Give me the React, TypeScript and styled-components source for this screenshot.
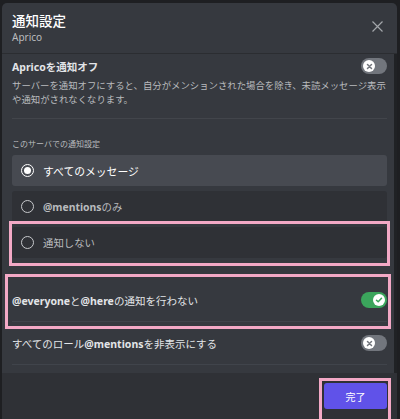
import styled, { createGlobalStyle } from 'styled-components';

const GlobalStyle = createGlobalStyle`
  html, body {
    margin: 0;
    background: #1e1f22;
  }
  body {
    font-family: 'Noto Sans', 'Noto Sans CJK JP', sans-serif;
    -webkit-font-smoothing: antialiased;
  }
`;

const Modal = styled.div`
  display: flex;
  flex-direction: column;
  height: 416px;
  margin: 3px 3px 0 2px;
  background: #36393f;
  border-radius: 5px 5px 0 0;
  overflow: hidden;
`;

const Header = styled.header`
  display: flex;
  align-items: flex-start;
  justify-content: space-between;
  padding: 10px 10px 9px 10px;
  border-bottom: 1px solid #2b2d31;
`;

const Title = styled.h1`
  margin: 0;
  font-size: 13.5px;
  line-height: 16px;
  font-weight: 500;
  color: #ffffff;
`;

const Subtitle = styled.div`
  margin-top: 1px;
  font-size: 10px;
  line-height: 14px;
  color: #b9bbbe;
`;

const CloseButton = styled.button`
  display: flex;
  margin: 8px 4px 0 0;
  padding: 0;
  border: none;
  background: none;
  color: #a3a6aa;
`;

const Body = styled.div`
  flex: 1;
  display: flex;
  min-height: 0;
`;

const Content = styled.div`
  flex: 1;
  padding: 4px 7px 0 10px;
`;

const ScrollTrack = styled.div`
  width: 3px;
  background: #202225;
`;

const SettingRow = styled.div<{ $tall?: boolean }>`
  display: flex;
  align-items: center;
  justify-content: space-between;
  height: ${({ $tall }) => ($tall ? '42px' : '16px')};
  border-bottom: ${({ $tall }) => ($tall ? '1px solid #40444b' : 'none')};
`;

const SettingLabel = styled.span<{ $bold?: boolean }>`
  font-size: 10.5px;
  font-weight: ${({ $bold }) => ($bold ? 700 : 400)};
  color: #e3e5e8;

  strong {
    font-weight: 700;
  }
`;

const Description = styled.p`
  margin: 5px 0 0;
  font-size: 9.4px;
  line-height: 13.5px;
  color: #b9bbbe;
`;

const Divider = styled.hr`
  margin: 12px 0 0;
  border: none;
  border-top: 1px solid #42454b;
`;

const SectionLabel = styled.div`
  margin: 19px 0 5px;
  font-size: 8px;
  line-height: 12px;
  color: #b9bbbe;
`;

const RadioList = styled.div`
  display: flex;
  flex-direction: column;
  gap: 5px;
  margin-bottom: 21px;
`;

const RadioItem = styled.div<{ $selected?: boolean }>`
  display: flex;
  align-items: center;
  gap: 9px;
  height: 31px;
  padding-left: 9px;
  border-radius: 3px;
  background: ${({ $selected }) => ($selected ? '#474a51' : '#2f3136')};
  color: ${({ $selected }) => ($selected ? '#ffffff' : '#b9bbbe')};
  font-size: ${({ $selected }) => ($selected ? '10.8px' : '10.4px')};

  strong {
    font-weight: 700;
  }
`;

const RadioDot = styled.span<{ $checked?: boolean }>`
  position: relative;
  box-sizing: border-box;
  width: 13px;
  height: 13px;
  border-radius: 50%;
  border: 1.6px solid ${({ $checked }) => ($checked ? '#ffffff' : '#c7c9cc')};

  &::after {
    content: '';
    display: ${({ $checked }) => ($checked ? 'block' : 'none')};
    position: absolute;
    inset: 2px;
    border-radius: 50%;
    background: #ffffff;
  }
`;

// pink annotation frame drawn over a row
const Marked = styled.div<{ $inset: string }>`
  position: relative;

  &::after {
    content: '';
    position: absolute;
    inset: ${({ $inset }) => $inset};
    border: 3px solid #f3a9c6;
    pointer-events: none;
  }
`;

const Toggle = styled.span<{ $on?: boolean }>`
  display: flex;
  align-items: center;
  justify-content: ${({ $on }) => ($on ? 'flex-end' : 'flex-start')};
  box-sizing: border-box;
  width: 26px;
  height: 16px;
  padding: 0 2px;
  border-radius: 8px;
  background: ${({ $on }) => ($on ? '#3ba55c' : '#72767d')};
`;

const Knob = styled.span<{ $on?: boolean }>`
  display: flex;
  align-items: center;
  justify-content: center;
  width: 12px;
  height: 12px;
  border-radius: 50%;
  background: #ffffff;
  color: ${({ $on }) => ($on ? '#3ba55c' : '#72767d')};
`;

const Footer = styled.footer`
  display: flex;
  justify-content: flex-end;
  height: 46px;
  padding: 10px 10px 0;
  box-sizing: border-box;
  background: #2f3136;
`;

const DoneButton = styled.button`
  width: 63px;
  height: 26px;
  border: none;
  border-radius: 3px;
  background: #6052e9;
  color: #ffffff;
  font-family: inherit;
  font-size: 10px;
`;

function Switch({ on }: { on?: boolean }) {
  return (
    <Toggle $on={on}>
      <Knob $on={on}>
        {on ? (
          <svg width="8" height="8" viewBox="0 0 8 8">
            <path d="M1.5 4.2 3.2 5.8 6.5 2.2" fill="none" stroke="currentColor" strokeWidth="1.5" strokeLinecap="round" strokeLinejoin="round" />
          </svg>
        ) : (
          <svg width="7" height="7" viewBox="0 0 7 7">
            <path d="M1.5 1.5 5.5 5.5M5.5 1.5 1.5 5.5" stroke="currentColor" strokeWidth="1.5" strokeLinecap="round" />
          </svg>
        )}
      </Knob>
    </Toggle>
  );
}

export default function App() {
  const levels = [
    { id: 'all', label: <>すべてのメッセージ</>, checked: true },
    { id: 'mentions', label: <><strong>@mentions</strong>のみ</> },
    { id: 'nothing', label: <>通知しない</>, marked: true },
  ];

  return (
    <>
      <GlobalStyle />
      <Modal>
        <Header>
          <div>
            <Title>通知設定</Title>
            <Subtitle>Aprico</Subtitle>
          </div>
          <CloseButton aria-label="閉じる">
            <svg width="11" height="11" viewBox="0 0 11 11">
              <path d="M0.5 0.5 10.5 10.5M10.5 0.5 0.5 10.5" stroke="currentColor" strokeWidth="1.2" />
            </svg>
          </CloseButton>
        </Header>

        <Body>
          <Content>
            <SettingRow>
              <SettingLabel $bold>Apricoを通知オフ</SettingLabel>
              <Switch />
            </SettingRow>
            <Description>
              サーバーを通知オフにすると、自分がメンションされた場合を除き、未読メッセージ表示や通知がされなくなります。
            </Description>
            <Divider />

            <SectionLabel>このサーバでの通知設定</SectionLabel>
            <RadioList>
              {levels.map((level) => {
                const item = (
                  <RadioItem key={level.id} $selected={level.checked}>
                    <RadioDot $checked={level.checked} />
                    <span>{level.label}</span>
                  </RadioItem>
                );
                return level.marked ? (
                  <Marked key={level.id} $inset="-6px -3px -8px -3px">
                    {item}
                  </Marked>
                ) : (
                  item
                );
              })}
            </RadioList>

            <Marked $inset="-5px -4px -7px -7px">
              <SettingRow $tall>
                <SettingLabel>
                  <strong>@everyone</strong>と<strong>@here</strong>の通知を行わない
                </SettingLabel>
                <Switch on />
              </SettingRow>
            </Marked>
            <SettingRow $tall>
              <SettingLabel>
                すべてのロール<strong>@mentions</strong>を非表示にする
              </SettingLabel>
              <Switch />
            </SettingRow>
          </Content>
          <ScrollTrack />
        </Body>

        <Footer>
          <Marked $inset="-5px -4px -5px -5px">
            <DoneButton>完了</DoneButton>
          </Marked>
        </Footer>
      </Modal>
    </>
  );
}
